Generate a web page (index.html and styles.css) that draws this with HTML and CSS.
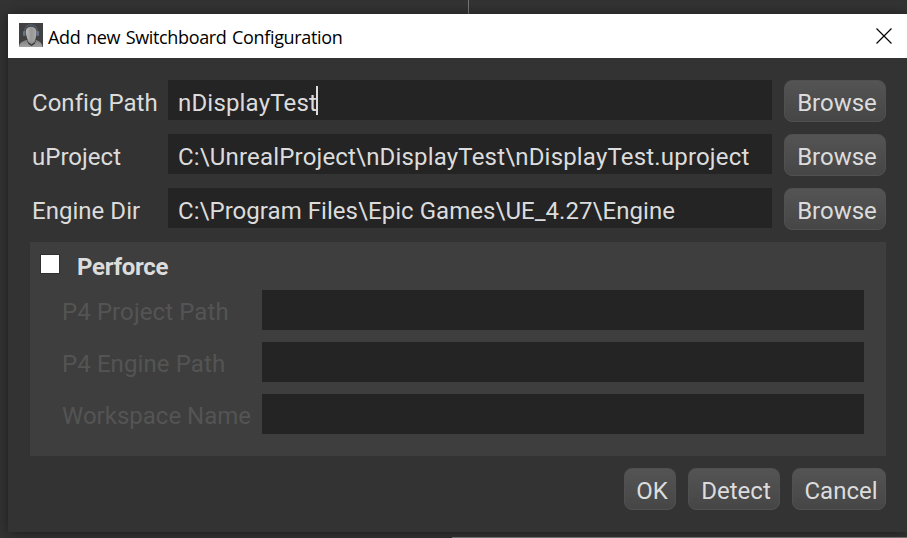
FILE: index.html
```html
<!DOCTYPE html>
<html lang="en">
<head>
<meta charset="utf-8">
<title>Add new Switchboard Configuration</title>
<link rel="stylesheet" href="styles.css">
</head>
<body>
<div class="divider-top"></div>
<div class="divider-bottom"></div>
<main class="dialog">
  <header class="titlebar">
    <svg class="app-icon" viewBox="0 0 24 24" aria-hidden="true">
      <defs>
        <linearGradient id="face" x1="0" x2="1" y1="0" y2="0"><stop offset="0" stop-color="#bcbcba"/><stop offset=".5" stop-color="#989898"/><stop offset="1" stop-color="#a9a9a7"/></linearGradient>
        <linearGradient id="body" x1="0" x2="0" y1="0" y2="1"><stop offset="0" stop-color="#808080"/><stop offset="1" stop-color="#a2a2a2"/></linearGradient>
      </defs>
      <rect width="24" height="24" fill="#414141"/>
      <path d="M0 24C0 20 3 18.500 7.500 17h9.500c4 1.500 6 3 6.500 7z" fill="url(#body)"/>
      <path d="M8 17.500l1.500 3.500 3 2 3-2 1.500-3.500z" fill="#303030"/>
      <path d="M8.500 14h8l-.5 5-3.500 2.500-3.500-2.500z" fill="#8c8c8c"/>
      <path d="M5.500 10C4-1 20-1 18.500 10" fill="none" stroke="#4f596a" stroke-width="1.300"/>
      <path d="M6.800 9C6.500 2 17.700 2 17.500 9c0 5-1.500 10-5 10S7.300 14 6.800 9z" fill="url(#face)"/>
      <rect x="4" y="8" width="2.500" height="5" rx="1" fill="#66758d"/>
      <rect x="17.500" y="8" width="2.500" height="5" rx="1" fill="#66758d"/>
    </svg>
    <h1 class="title">Add new Switchboard Configuration</h1>
    <svg class="close" viewBox="0 0 16 16" role="img" aria-label="Close"><path d="M.5.5l15 15M15.500.5l-15 15" fill="none" stroke="#000" stroke-width="1.150"/></svg>
  </header>
  <form class="content">
    <div class="row"><span class="label">Config Path</span><div class="field wide">nDisplayTest<span class="caret"></span></div><button type="button" class="button">Browse</button></div>
    <div class="row"><span class="label">uProject</span><div class="field wide">C:\UnrealProject\nDisplayTest\nDisplayTest.uproject</div><button type="button" class="button">Browse</button></div>
    <div class="row"><span class="label">Engine Dir</span><div class="field engine">C:\Program Files\Epic Games\UE_4.27\Engine</div><button type="button" class="button">Browse</button></div>
    <section class="group">
      <div class="group-head"><span class="checkbox"></span><span class="group-title">Perforce</span></div>
      <div class="sub-row"><span class="path">P4 Project Path</span><div class="field"></div></div>
      <div class="sub-row"><span class="path">P4 Engine Path</span><div class="field"></div></div>
      <div class="sub-row"><span>Workspace Name</span><div class="field"></div></div>
    </section>
    <footer class="actions">
      <button type="button" class="button ok">OK</button>
      <button type="button" class="button detect">Detect</button>
      <button type="button" class="button cancel">Cancel</button>
    </footer>
  </form>
</main>
</body>
</html>
```

FILE: styles.css
```css
* { box-sizing: border-box; }
body {
  margin: 0;
  height: 538px;
  padding: 14px 0 0 8px;
  overflow: hidden;
  position: relative;
  background: #333;
  color: #dcdcdc;
  font: 24px/30px Roboto, sans-serif;
}
.dialog {
  position: relative;
  height: 518px;
  background: #333;
  box-shadow: 0 1px 12px rgba(0, 0, 0, .45);
}
.divider-top {
  position: absolute;
  top: 0;
  left: 468px;
  width: 1px;
  height: 14px;
  background: #777;
}
.divider-bottom {
  position: absolute;
  z-index: 1;
  top: 537px;
  left: 452px;
  right: 0;
  height: 1px;
  background: #707070;
}
.titlebar {
  height: 44px;
  padding: 0 16px 0 11px;
  display: flex;
  align-items: center;
  background: #fff;
  color: #000;
}
.app-icon { width: 24px; height: 24px; margin: 0 5px 2px 0; }
.title {
  flex: 1;
  margin: 1px 0 0;
  font: 400 18px/24px "Open Sans", sans-serif;
  letter-spacing: -.35px;
  word-spacing: 1.3px;
  white-space: nowrap;
}
.close { width: 16px; height: 16px; margin: 0 -1px 1px 0; }
.content { padding: 22px 21px 0 22px; }
.row {
  width: 856px;
  height: 42px;
  margin-bottom: 12px;
  display: grid;
  grid-template-columns: 138px 604px 102px;
  align-items: start;
}
.row .button { margin-left: 12px; width: 102px; }
.row .label { padding: 8px 0 0 2px; white-space: nowrap; letter-spacing: .03px; }
.path { letter-spacing: .1px; }
.field {
  position: relative;
  height: 40px;
  padding: 8px 10px 0;
  background: #242424;
  white-space: nowrap;
}
.wide { letter-spacing: .18px; }
.engine { letter-spacing: .05px; }
.caret {
  position: absolute;
  top: 6px;
  width: 2px;
  height: 29px;
  margin-left: -1px;
  background: #dcdcdc;
}
.button {
  height: 42px;
  padding: 4px 0 0 4px;
  border: 1px solid #505050;
  border-radius: 8px;
  background: linear-gradient(#545454, #464646);
  color: #dcdcdc;
  font: inherit;
}
.group {
  height: 214px;
  width: 856px;
  padding: 9px 22px 0 11px;
  background: #3e3e3e;
}
.group-head {
  height: 39px;
  display: flex;
  gap: 18px;
  font-weight: 700;
}
.checkbox {
  width: 18px;
  height: 18px;
  margin-top: 4px;
  background: #fff;
  outline: 1px solid #303030;
}
.group-title { padding-top: 1px; letter-spacing: -.3px; }
.sub-row {
  display: grid;
  grid-template-columns: 200px 602px;
  margin: 0 0 12px 21px;
  color: #545454;
  white-space: nowrap;
}
.sub-row > span { padding-top: 7px; }
.actions {
  width: 856px;
  margin-top: 12px;
  display: flex;
  justify-content: flex-end;
  gap: 12px;
}
.ok { width: 52px; }
.detect { width: 92px; }
.cancel { width: 94px; }
```
